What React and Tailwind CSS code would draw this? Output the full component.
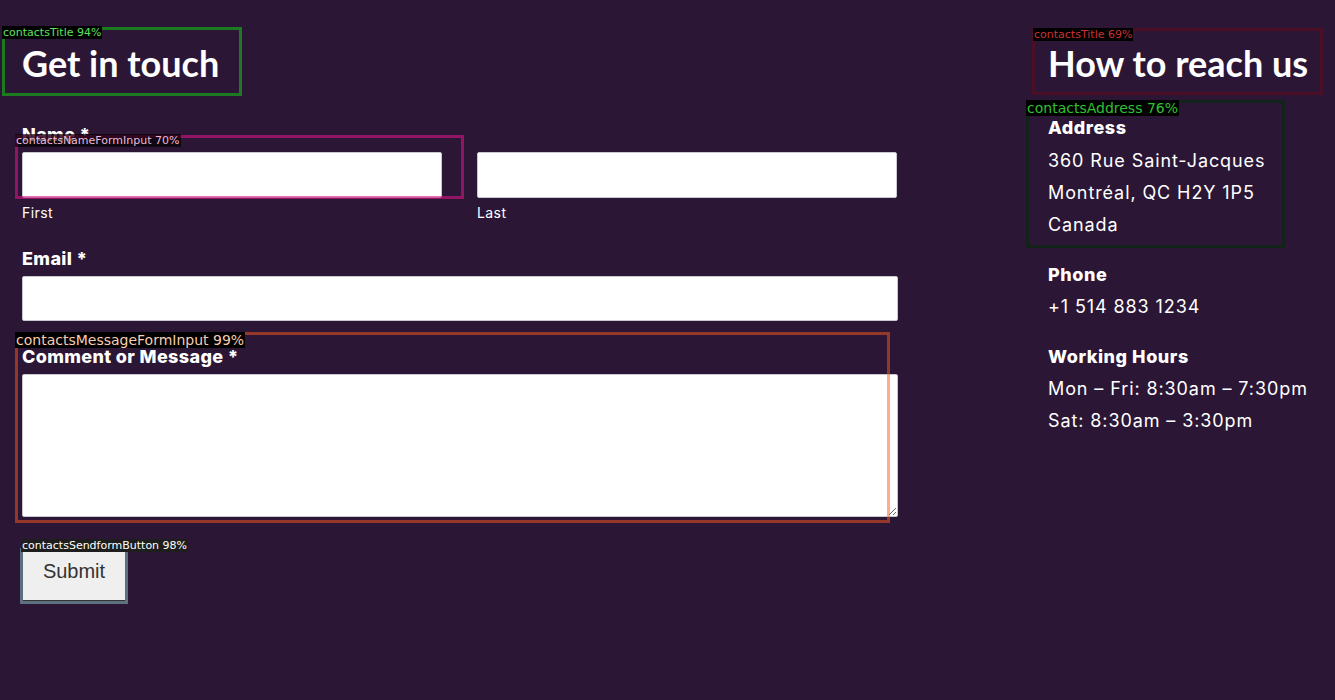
import React from "react";

const body = { fontFamily: "Inter, 'Noto Sans', sans-serif" };
const title = { fontFamily: "Lato, 'Noto Sans', sans-serif" };
const mono = { fontFamily: "'DejaVu Sans', sans-serif" };

function Overlay({ box, label, labelCls, boxCls, labelPos }) {
  return (
    <>
      <div className={`absolute pointer-events-none ${boxCls}`} style={box} />
      <div
        className={`absolute pointer-events-none whitespace-nowrap leading-none px-[1px] ${labelCls}`}
        style={{ ...mono, ...labelPos }}
      >
        {label}
      </div>
    </>
  );
}

export default function App() {
  return (
    <div className="relative min-h-[700px] w-full bg-[#2b1735] text-white overflow-hidden" style={body}>
      <div className="flex pl-[22px] pt-[41px]">
        {/* Left form */}
        <div className="w-[876px]">
          <h2 className="text-[36px] leading-[44px] font-bold" style={title}>Get in touch</h2>
          <form className="mt-[39px]" onSubmit={(e) => e.preventDefault()}>
            <label className="block text-[18px] leading-[22px] font-extrabold tracking-[0.02em]">Name *</label>
            <div className="mt-[6px] flex gap-[35px]">
              <div className="w-[420px]">
                <input className="block w-full h-[46px] bg-white border border-[#c8c8d0] rounded-[2px]" />
                <div className="mt-[6px] text-[14px] leading-[18px] tracking-[0.03em]">First</div>
              </div>
              <div className="w-[420px]">
                <input className="block w-full h-[46px] bg-white border border-[#c8c8d0] rounded-[2px]" />
                <div className="mt-[6px] text-[14px] leading-[18px] tracking-[0.03em]">Last</div>
              </div>
            </div>
            <label className="block mt-[26px] text-[18px] leading-[22px] font-extrabold tracking-[0.02em]">Email *</label>
            <input className="block mt-[6px] w-full h-[45px] bg-white border border-[#c8c8d0] rounded-[2px]" />
            <label className="block mt-[25px] text-[18px] leading-[22px] font-extrabold tracking-[0.02em]">Comment or Message *</label>
            <textarea className="block mt-[6px] w-full h-[143px] bg-white border border-[#c8c8d0] rounded-[2px]" />
            <button
              type="submit"
              className="mt-[33px] w-[104px] h-[51px] pb-[9px] bg-[#efefef] text-[#333] text-[20px] border border-t-[#f8f8f8] border-l-[#f8f8f8] border-r-[#333] border-b-[#333]"
              style={{ fontFamily: "'Liberation Sans', Arial, sans-serif" }}
            >
              Submit
            </button>
          </form>
        </div>

        {/* Right column */}
        <div className="ml-[150px]">
          <h2 className="text-[36px] leading-[44px] font-bold" style={title}>How to reach us</h2>
          <div className="mt-[32px] text-[18px] leading-[32px] tracking-[0.05em]">
            <div className="font-extrabold leading-[22px] tracking-[0.03em]">Address</div>
            <div className="mt-[6px]">360 Rue Saint-Jacques</div>
            <div>Montréal, QC H2Y 1P5</div>
            <div>Canada</div>
            <div className="mt-[23px] font-extrabold leading-[22px] tracking-[0.03em]">Phone</div>
            <div className="mt-[5px]">+1 514 883 1234</div>
            <div className="mt-[23px] font-extrabold leading-[22px] tracking-[0.03em]">Working Hours</div>
            <div className="mt-[5px]">Mon – Fri: 8:30am – 7:30pm</div>
            <div>Sat: 8:30am – 3:30pm</div>
          </div>
        </div>
      </div>

      {/* Detection overlays */}
      <Overlay
        box={{ left: 2, top: 27, width: 240, height: 69 }}
        boxCls="border-[3px] border-[#1c7a20]"
        label="contactsTitle 94%"
        labelCls="bg-black text-[#5ee05e] text-[11px] py-[1px]"
        labelPos={{ left: 2, top: 26 }}
      />
      <Overlay
        box={{ left: 15, top: 135, width: 449, height: 64 }}
        boxCls="border-[3px] border-[rgba(214,20,130,0.6)]"
        label="contactsNameFormInput 70%"
        labelCls="bg-[rgba(0,0,0,0.65)] text-[#f0b8d8] text-[11px] py-[1px]"
        labelPos={{ left: 15, top: 134 }}
      />
      <Overlay
        box={{ left: 15, top: 332, width: 875, height: 191 }}
        boxCls="border-[3px] border-[rgba(255,90,30,0.5)]"
        label="contactsMessageFormInput 99%"
        labelCls="bg-black text-[#f6cdb0] text-[14px] py-[1px]"
        labelPos={{ left: 15, top: 332 }}
      />
      <Overlay
        box={{ left: 20, top: 548, width: 108, height: 56 }}
        boxCls="border-[3px] border-[#5d7080]"
        label="contactsSendformButton 98%"
        labelCls="bg-[#1e1e1e] text-white text-[11px] py-[1px]"
        labelPos={{ left: 21, top: 539 }}
      />
      <Overlay
        box={{ left: 1032, top: 28, width: 291, height: 67 }}
        boxCls="border-[3px] border-[#4a0f24]"
        label="contactsTitle 69%"
        labelCls="bg-black text-[#c83232] text-[11px] py-[1px]"
        labelPos={{ left: 1033, top: 28 }}
      />
      <Overlay
        box={{ left: 1026, top: 100, width: 259, height: 148 }}
        boxCls="border-[3px] border-[#14231a]"
        label="contactsAddress 76%"
        labelCls="bg-black text-[#30c030] text-[14px] py-[1px]"
        labelPos={{ left: 1026, top: 100 }}
      />
    </div>
  );
}
